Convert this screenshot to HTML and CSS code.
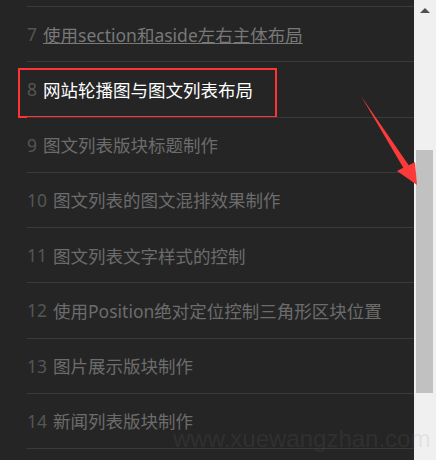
FILE: index.html
```html
<!DOCTYPE html>
<html>
<head>
  <meta charset="UTF-8">
  <title>课程目录</title>
  <link rel="stylesheet" href="styles.css">
</head>
<body>
  <div class="page">
    <div class="chapter-list">
      <ul class="chapters">
        <li class="chapter">
          <span class="num">7</span>
          <a class="title title-link" href="#">使用section和aside左右主体布局</a>
        </li>
        <li class="chapter chapter-current">
          <span class="num">8</span>
          <span class="title">网站轮播图与图文列表布局</span>
          <div class="mark-box"></div>
        </li>
        <li class="chapter"><span class="num">9</span> <span class="title">图文列表版块标题制作</span></li>
        <li class="chapter"><span class="num">10</span> <span class="title">图文列表的图文混排效果制作</span></li>
        <li class="chapter"><span class="num">11</span> <span class="title">图文列表文字样式的控制</span></li>
        <li class="chapter"><span class="num">12</span> <span class="title">使用Position绝对定位控制三角形区块位置</span></li>
        <li class="chapter"><span class="num">13</span> <span class="title">图片展示版块制作</span></li>
        <li class="chapter"><span class="num">14</span> <span class="title">新闻列表版块制作</span></li>
        <li class="chapter"></li>
      </ul>
    </div>

    <div class="scrollbar">
      <div class="scroll-up"></div>
      <div class="scroll-thumb"></div>
    </div>

    <!-- 标注箭头 -->
    <svg class="mark-arrow" width="436" height="460" viewBox="0 0 436 460">
      <polygon points="361,96 408.7,165.2 415,162 417,185 397,171 403.3,167.8" fill="#fb3a3a"/>
    </svg>

    <div class="watermark">www.xuewangzhan.com</div>
  </div>
</body>
</html>
```

FILE: styles.css
```css
html, body {
  margin: 0;
  padding: 0;
}
body {
  background-color: #252525;
  font-family: 'Noto Sans', 'Noto Sans CJK SC', sans-serif;
  font-size: 17.5px;
  overflow: hidden;
}
.page {
  position: relative;
  display: flex;
  width: 436px;
  height: 460px;
  overflow: hidden;
}
.chapter-list {
  flex: 1;
  padding: 6px 0 0 27px;
}
.chapters {
  list-style: none;
  margin: 0;
  padding: 0;
}
.chapter {
  position: relative;
  display: flex;
  align-items: center;
  gap: 6px;
  height: 55.25px;
  box-sizing: border-box;
  border-top: 1px solid #3a3a3a;
  white-space: nowrap;
}
.num {
  color: #555;
}
.title {
  color: #6c6c6c;
}
.title-link {
  color: #787878;
  text-decoration: underline;
}
.chapter-current .title {
  color: #fff;
}
.mark-box {
  position: absolute;
  left: -9px;
  top: 6px;
  width: 259px;
  height: 50px;
  box-sizing: border-box;
  border: 2px solid #f33;
}
.scrollbar {
  width: 22px;
  background-color: #f0f0f0;
  display: flex;
  flex-direction: column;
  align-items: flex-start;
}
.scroll-up {
  width: 0;
  height: 0;
  margin: 8px 0 0 6px;
  border-left: 5px solid transparent;
  border-right: 5px solid transparent;
  border-bottom: 5px solid #505050;
}
.scroll-thumb {
  width: 17px;
  height: 243px;
  margin: 137px 0 0 2px;
  background-color: #c1c1c1;
}
.mark-arrow {
  position: absolute;
  left: 0;
  top: 0;
}
.watermark {
  position: absolute;
  left: 173px;
  top: 425px;
  font-family: 'Liberation Sans', sans-serif;
  font-size: 24px;
  color: rgba(128, 128, 128, 0.14);
}
```
